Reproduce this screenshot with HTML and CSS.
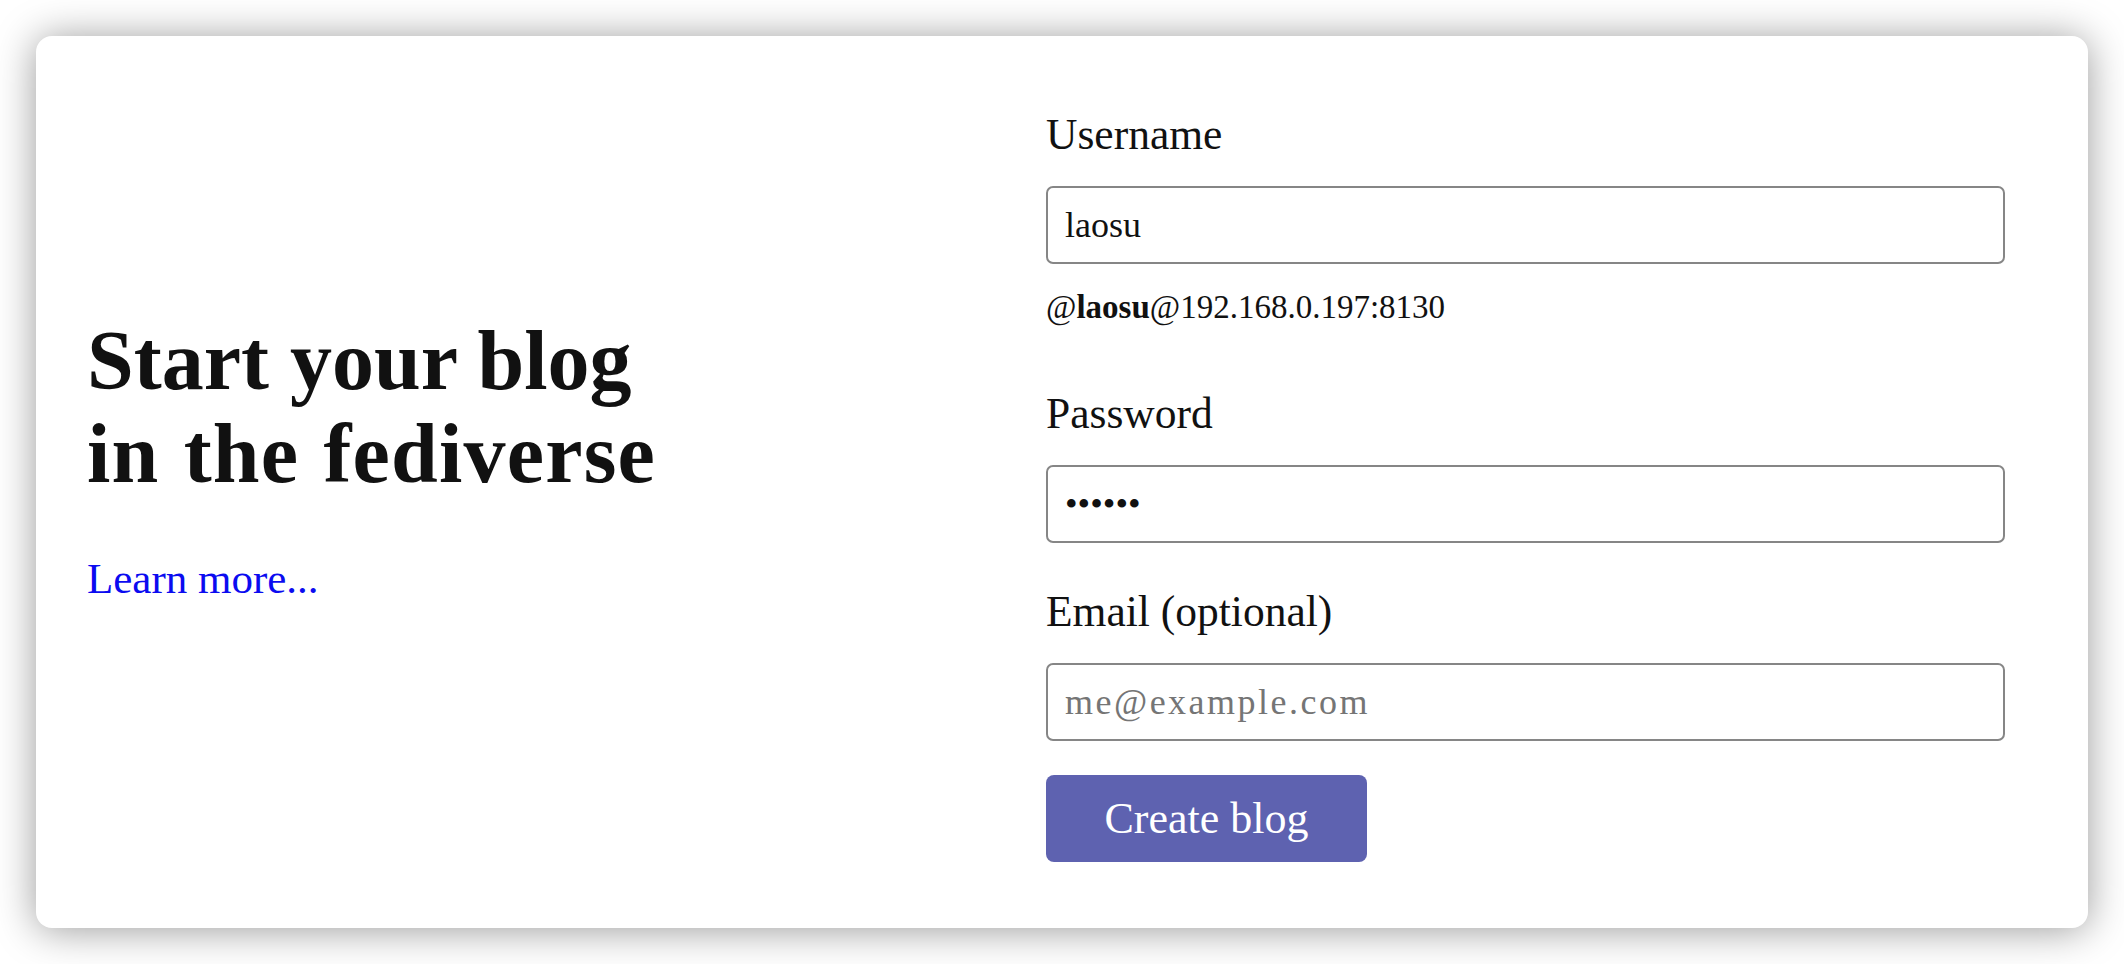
FILE: index.html
```html
<!DOCTYPE html>
<html lang="en">
<head>
<meta charset="utf-8">
<title>Start your blog in the fediverse</title>
<link rel="stylesheet" href="styles.css">
</head>
<body>
<main class="card">
  <section class="intro">
    <h1 class="title">Start your blog<br><span class="title-2">in the fediverse</span></h1>
    <a class="learn" href="#">Learn more...</a>
  </section>
  <form class="signup">
    <label class="label" for="username">Username</label>
    <input class="field" id="username" type="text" value="laosu">
    <p class="handle">@<b>laosu</b>@192.168.0.197:8130</p>
    <label class="label label-pw" for="password">Password</label>
    <input class="field" id="password" type="password" value="123456">
    <label class="label label-email" for="email">Email (optional)</label>
    <input class="field" id="email" type="email" placeholder="me@example.com">
    <button class="submit" type="button">Create blog</button>
  </form>
</main>
</body>
</html>
```
FILE: styles.css
```css
html, body {
  margin: 0;
  padding: 0;
  background: #ffffff;
}
body {
  padding: 36px;
  box-sizing: border-box;
  height: 964px;
  font-family: "Liberation Serif", "Times New Roman", serif;
  color: #111111;
}
.card {
  height: 892px;
  box-sizing: border-box;
  background: #ffffff;
  border-radius: 16px;
  box-shadow: 0 2px 40px rgba(0, 0, 0, 0.4);
  display: grid;
  grid-template-columns: 959px 959px;
  padding: 0 83px 0 51px;
  justify-content: space-between;
  align-items: center;
}
.intro {
  display: flex;
  flex-direction: column;
  align-items: flex-start;
  padding-bottom: 46px;
}
.title {
  margin: 0;
  font-size: 84px;
  line-height: 93px;
  font-weight: 700;
  color: #111111;
}
.title-2 {
  letter-spacing: 1.2px;
  word-spacing: 2px;
}
.learn {
  margin-top: 54px;
  font-size: 43px;
  line-height: 50px;
  color: #0b0bf0;
  text-decoration: none;
}
.signup {
  display: flex;
  flex-direction: column;
  align-items: flex-start;
  margin: 0;
  padding-top: 6px;
}
.label {
  display: block;
  font-size: 43.5px;
  line-height: 52px;
  color: #111111;
}
.label-pw {
  margin-top: 60px;
}
.label-email {
  margin-top: 42px;
}
.field {
  margin-top: 26px;
  width: 959px;
  height: 78px;
  box-sizing: border-box;
  border: 2px solid #868686;
  border-radius: 7px;
  padding: 0 17px;
  font-family: "Liberation Serif", "Times New Roman", serif;
  font-size: 36px;
  color: #111111;
  background: #ffffff;
  outline: none;
}
.field::placeholder {
  color: #757575;
  letter-spacing: 2.5px;
}
.handle {
  margin: 23px 0 0;
  font-size: 33px;
  line-height: 40px;
  color: #111111;
}
.handle b {
  font-weight: 700;
}
.submit {
  margin-top: 34px;
  width: 321px;
  height: 87px;
  border: none;
  border-radius: 8px;
  background: #5e62b0;
  color: #ffffff;
  font-family: "Liberation Serif", "Times New Roman", serif;
  font-size: 44px;
  padding: 0;
}
```
